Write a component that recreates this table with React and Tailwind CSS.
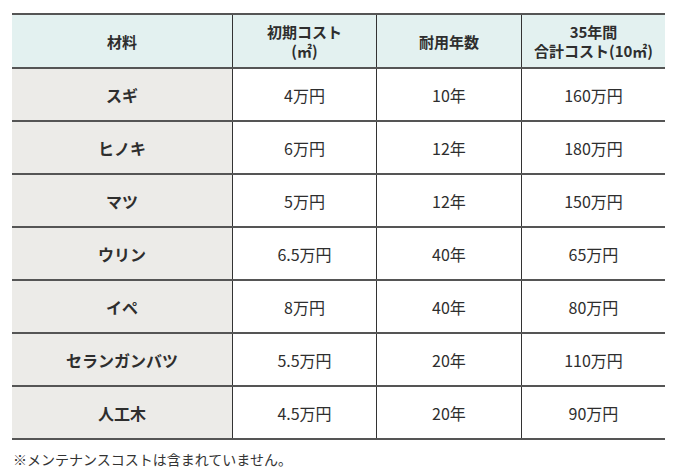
import React from 'react';

const rows = [
  ['スギ', '4万円', '10年', '160万円'],
  ['ヒノキ', '6万円', '12年', '180万円'],
  ['マツ', '5万円', '12年', '150万円'],
  ['ウリン', '6.5万円', '40年', '65万円'],
  ['イペ', '8万円', '40年', '80万円'],
  ['セランガンバツ', '5.5万円', '20年', '110万円'],
  ['人工木', '4.5万円', '20年', '90万円'],
];

const font = { fontFamily: '"Noto Sans CJK JP", "Noto Sans", sans-serif' };

const App = () => {
  return (
    <div className="w-[680px] h-[475px] bg-white text-[#2e2e2e] pt-[13px] pl-3" style={font}>
      <div className="w-[653px] border-t-2 border-b-2 border-[#555]">
        {/* header */}
        <div className="flex h-[52px] bg-[#e3f1f0] text-[15px] font-bold leading-[19px] text-center">
          <div className="w-[220px] flex items-center justify-center">材料</div>
          <div className="w-[144px] flex flex-col items-center justify-center border-l border-[#333]">
            <span>初期コスト</span>
            <span>(㎡)</span>
          </div>
          <div className="w-[145px] flex items-center justify-center border-l border-[#333]">耐用年数</div>
          <div className="w-[144px] flex flex-col items-center justify-center border-l border-[#333]">
            <span>35年間</span>
            <span>合計コスト(10㎡)</span>
          </div>
        </div>

        {/* body rows */}
        {rows.map((r) => (
          <div key={r[0]} className="flex h-[53px] border-t-2 border-[#555] text-[16px]">
            <div className="w-[220px] bg-[#ecebe8] flex items-center justify-center font-bold">{r[0]}</div>
            <div className="w-[144px] flex items-center justify-center border-l border-[#333]">{r[1]}</div>
            <div className="w-[145px] flex items-center justify-center border-l border-[#333]">{r[2]}</div>
            <div className="w-[144px] flex items-center justify-center border-l border-[#333]">{r[3]}</div>
          </div>
        ))}
      </div>
      <p className="mt-[9px] ml-[1px] text-[14px] text-[#333]">※メンテナンスコストは含まれていません。</p>
    </div>
  );
};

export default App;
